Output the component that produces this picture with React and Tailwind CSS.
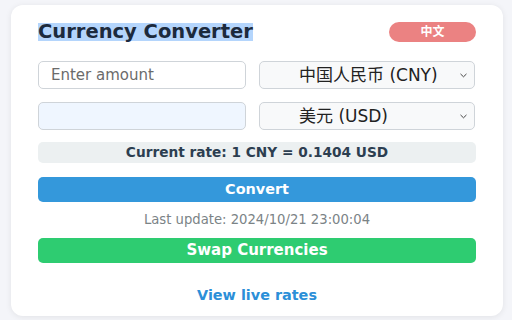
import React from 'react';

const sans = { fontFamily: '"DejaVu Sans", "Noto Sans CJK SC", sans-serif' };

const Chevron = () => (
  <svg width="7" height="5" viewBox="0 0 7 5" fill="none" className="shrink-0">
    <path d="M0.8 1.2 L3.5 3.8 L6.2 1.2" stroke="#444" strokeWidth="1" strokeLinecap="round" strokeLinejoin="round" />
  </svg>
);

const FakeSelect = ({ label }) => (
  <div className="flex items-center w-[216px] h-[28px] bg-[#f8f9fa] border border-[#cfd4d9] rounded-[5px] pl-[39px] pr-[7px]">
    <span className="flex-1 text-[17px] text-[#222] leading-none">{label}</span>
    <Chevron />
  </div>
);

export default function App() {
  return (
    <div className="w-[512px] h-[320px] bg-[#f4f5f9] pt-[5px] pl-[11px]" style={sans}>
      <div className="w-[492px] h-[311px] bg-white rounded-[12px] shadow-[0_1px_6px_rgba(0,0,0,0.08)] px-[27px] pt-[17px] flex flex-col">
        <div className="flex items-center justify-between h-[20px]">
          <span className="bg-[#b4d5fc] text-[#1c2a3c] font-bold text-[19.5px] leading-[18px]">Currency Converter</span>
          <span className="w-[87px] h-[20px] rounded-full bg-[#eb8282] text-white font-bold text-[12px] flex items-center justify-center">中文</span>
        </div>

        <div className="flex gap-[13px] mt-[19px]">
          <div className="w-[208px] h-[28px] border border-[#cfd4d9] rounded-[5px] bg-white flex items-center pl-[12px]">
            <span className="text-[15px] text-[#6b6b6b] leading-none">Enter amount</span>
          </div>
          <FakeSelect label="中国人民币 (CNY)" />
        </div>

        <div className="flex gap-[13px] mt-[13px]">
          <div className="w-[208px] h-[28px] border border-[#cfd4d9] rounded-[5px] bg-[#eff6ff]" />
          <FakeSelect label="美元 (USD)" />
        </div>

        <div className="mt-[12px] h-[21px] rounded-[5px] bg-[#ecf0f1] flex items-center justify-center text-[13.7px] font-bold text-[#2c3e50]">
          Current rate: 1 CNY = 0.1404 USD
        </div>

        <div className="mt-[14px] h-[25px] rounded-[5px] bg-[#3498db] flex items-center justify-center text-[14.4px] font-bold text-white">
          Convert
        </div>

        <div className="mt-[10px] text-center text-[13.2px] text-[#7b8386] leading-[15px]">
          Last update: 2024/10/21 23:00:04
        </div>

        <div className="mt-[11px] h-[25px] rounded-[5px] bg-[#2ecc71] flex items-center justify-center text-[15px] font-bold text-white">
          Swap Currencies
        </div>

        <div className="mt-[22px] text-center text-[14.4px] font-bold text-[#2b8fd8]">
          View live rates
        </div>
      </div>
    </div>
  );
}
